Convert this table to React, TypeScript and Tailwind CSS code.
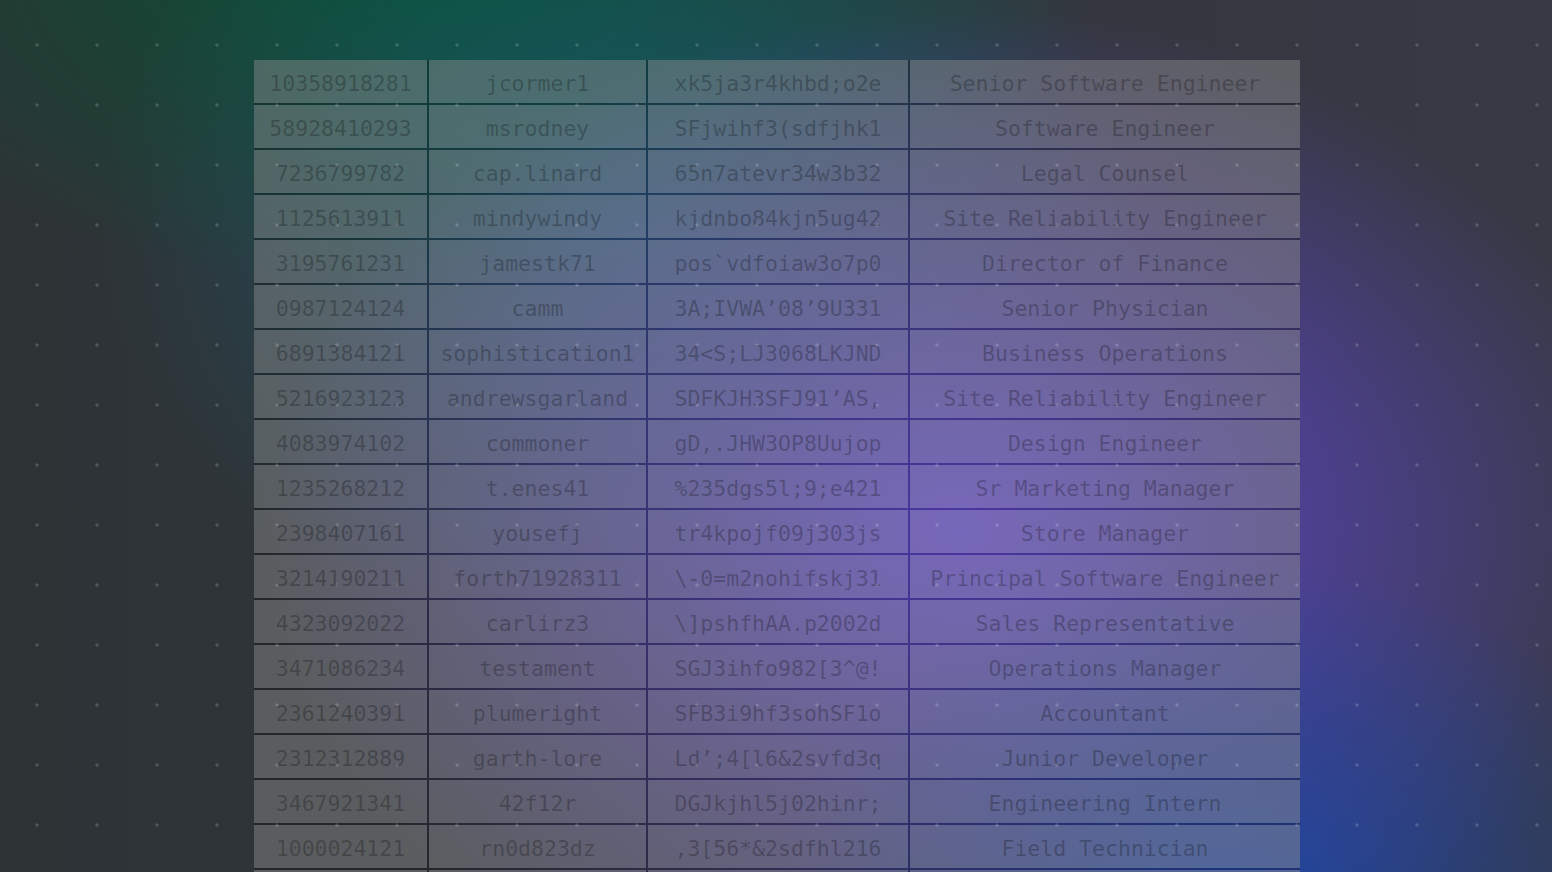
import React from "react";

const rows: [string, string, string, string][] = [
  ["10358918281", "jcormer1", "xk5ja3r4khbd;o2e", "Senior Software Engineer"],
  ["58928410293", "msrodney", "SFjwihf3(sdfjhk1", "Software Engineer"],
  ["7236799782", "cap.linard", "65n7atevr34w3b32", "Legal Counsel"],
  ["1125613911", "mindywindy", "kjdnbo84kjn5ug42", "Site Reliability Engineer"],
  ["3195761231", "jamestk71", "pos`vdfoiaw3o7p0", "Director of Finance"],
  ["0987124124", "camm", "3A;IVWA’08’9U331", "Senior Physician"],
  ["6891384121", "sophistication1", "34<S;LJ3068LKJND", "Business Operations"],
  ["5216923123", "andrewsgarland", "SDFKJH3SFJ91’AS,", "Site Reliability Engineer"],
  ["4083974102", "commoner", "gD,.JHW3OP8Uujop", "Design Engineer"],
  ["1235268212", "t.enes41", "%235dgs5l;9;e421", "Sr Marketing Manager"],
  ["2398407161", "yousefj", "tr4kpojf09j303js", "Store Manager"],
  ["3214190211", "forth71928311", "\\-0=m2nohifskj31", "Principal Software Engineer"],
  ["4323092022", "carlirz3", "\\]pshfhAA.p2002d", "Sales Representative"],
  ["3471086234", "testament", "SGJ3ihfo982[3^@!", "Operations Manager"],
  ["2361240391", "plumeright", "SFB3i9hf3sohSF1o", "Accountant"],
  ["2312312889", "garth-lore", "Ld’;4[l6&2svfd3q", "Junior Developer"],
  ["3467921341", "42f12r", "DGJkjhl5j02hinr;", "Engineering Intern"],
  ["1000024121", "rn0d823dz", ",3[56*&2sdfhl216", "Field Technician"],
  ["", "", "", ""],
];

export default function App() {
  return (
    <div className="relative w-[1552px] h-[872px] overflow-hidden bg-linear-to-r from-[#2d3335] to-[#373944]">
      {/* background glows */}
      <div className="pointer-events-none absolute inset-0 bg-[radial-gradient(640px_340px_at_450px_-40px,rgba(6,82,50,1),rgba(6,82,50,0)_100%)]" />
      <div className="pointer-events-none absolute inset-0 bg-[radial-gradient(520px_440px_at_620px_220px,rgba(22,96,122,0.7),rgba(22,96,122,0)_100%)]" />
      <div className="pointer-events-none absolute inset-0 bg-[radial-gradient(700px_520px_at_960px_530px,rgba(104,74,236,0.9),rgba(104,74,236,0)_100%)]" />
      <div className="pointer-events-none absolute inset-0 bg-[radial-gradient(460px_340px_at_1230px_900px,rgba(26,72,176,0.85),rgba(26,72,176,0)_100%)]" />

      {/* table */}
      <div className="relative pt-[60px] pl-[254px]">
        <div className="grid w-[1046px] grid-cols-[173px_217px_260px_390px] gap-[2px] bg-black/25 font-['DejaVu_Sans_Mono','Liberation_Mono',monospace] text-[21.5px] text-black/25">
          {rows.map((r, i) =>
            r.map((c, j) => (
              <div
                key={i + "-" + j}
                className="flex h-[43px] items-center justify-center whitespace-pre bg-white/25 pt-[5px]"
              >
                {c}
              </div>
            ))
          )}
        </div>
      </div>

      {/* dot grid overlay */}
      <div className="pointer-events-none absolute inset-0 bg-[radial-gradient(circle,rgba(255,255,255,0.17)_1.3px,rgba(255,255,255,0)_2px)] bg-size-[60px_60px] bg-position-[7px_15px]" />
    </div>
  );
}
